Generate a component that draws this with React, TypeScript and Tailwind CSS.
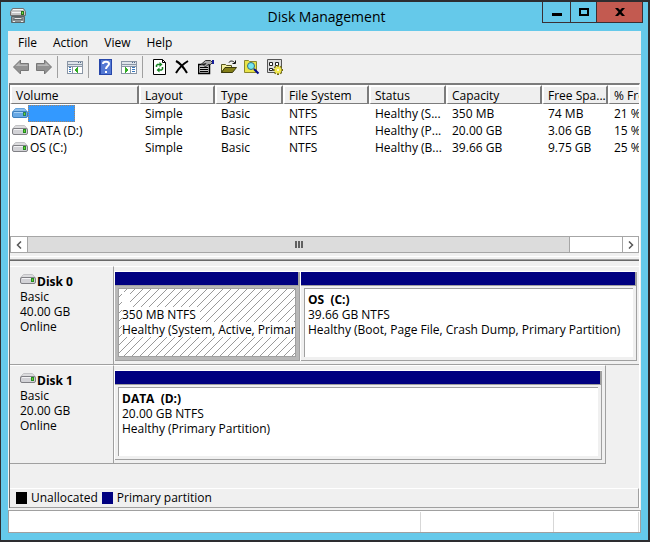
import React from "react";

interface IVolume {
  name: string;
  layout: string;
  type: string;
  fs: string;
  status: string;
  capacity: string;
  free: string;
  percent: string;
  selected?: boolean;
}

const volumes: IVolume[] = [
  { name: "", layout: "Simple", type: "Basic", fs: "NTFS", status: "Healthy (S...", capacity: "350 MB", free: "74 MB", percent: "21 %", selected: true },
  { name: "DATA (D:)", layout: "Simple", type: "Basic", fs: "NTFS", status: "Healthy (P...", capacity: "20.00 GB", free: "3.06 GB", percent: "15 %" },
  { name: "OS (C:)", layout: "Simple", type: "Basic", fs: "NTFS", status: "Healthy (B...", capacity: "39.66 GB", free: "9.75 GB", percent: "25 %" },
];

const columns = [
  { label: "Volume", width: "w-[129px]" },
  { label: "Layout", width: "w-[76px]" },
  { label: "Type", width: "w-[68px]" },
  { label: "File System", width: "w-[86px]" },
  { label: "Status", width: "w-[77px]" },
  { label: "Capacity", width: "w-[96px]" },
  { label: "Free Spa...", width: "w-[66px]" },
  { label: "% Free", width: "w-[102px]" },
];

function DriveIcon({ selected = false }: { selected?: boolean }) {
  return (
    <svg className="w-4 h-[11px] shrink-0" viewBox="0 0 16 11">
      <path d="M3.500.5h9l3 3.500H.5z" fill={selected ? "#8dc0ee" : "#dcdcde"} stroke={selected ? "#65a4dd" : "#c2c2c5"} />
      <rect x=".5" y="3.500" width="15" height="6" rx="1.500" fill={selected ? "#68a9e5" : "#d2d2d6"} stroke={selected ? "#3f80bd" : "#808085"} />
      <path d="M2 4.500h9" stroke={selected ? "#a8d2f7" : "#f3f3f5"} />
      <rect x="11" y="4" width="3" height="4" fill={selected ? "#29825c" : "#238c22"} />
      <rect x="12" y="5" width="1" height="2" fill="#6bd52d" />
    </svg>
  );
}

function AppIcon() {
  return (
    <svg className="w-4 h-4" viewBox="0 0 16 16">
      <path d="M2.500.5h11l2 3v4h-15v-4z" fill="#c5c5c5" stroke="#707070" />
      <path d="M3 1.500h10M2 4.500h9" stroke="#f5f5f5" />
      <rect x="11" y="3" width="3" height="4" fill="#276f20" />
      <rect x="12" y="4" width="1" height="2" fill="#75e13b" />
      <path d="M1.500 8.500h13v6h-13z" fill="#8d9496" stroke="#596568" />
      <path d="M4.500 9.500h7l1 2h-9z" fill="#e7e7e7" stroke="#646b6d" />
      <path d="M3 13.500h2M11 13.500h2" stroke="#e9eeee" />
    </svg>
  );
}

function ArrowIcon({ forward = false }: { forward?: boolean }) {
  return (
    <svg className="w-4 h-4" viewBox="0 0 16 16">
      <path
        d={forward ? "M15.500 8 8.500 1v3.500H.5v7h8V15z" : "M.5 8 7.500 1v3.500h8v7h-8V15z"}
        fill="#929292"
        stroke="#777"
      />
      <path
        d={forward ? "M9.500 3.500v2h-8v1.500h12z" : "M6.500 3.500v2h8v1.500h-12z"}
        fill="#b9b9b9"
      />
    </svg>
  );
}

function PaneIcon({ right = false }: { right?: boolean }) {
  return (
    <svg className="w-4 h-4" viewBox="0 0 16 16" shapeRendering="crispEdges">
      <path d="M0 2h16v13H0z" fill="#8a96a5" />
      <path d="M1 3h14v2H1zM1 6h14v1H1z" fill="#dfe4ea" />
      <path d="M11 3h1v1h-1zM13 3h1v1h-1z" fill="#526b89" />
      <path d={right ? "M1 8h8v6H1zM10 8h5v6h-5z" : "M1 8h4v6H1zM6 8h9v6H6z"} fill="#fff" />
      <path
        d={right ? "M11 8h3v1h-3zM11 10h3v1h-3zM11 12h3v1h-3z" : "M2 8h2v1H2zM2 10h2v1H2zM2 12h2v1H2z"}
        fill="#3978bd"
      />
      <path d={right ? "M4 8v6l4-3z" : "M11 8v6l-4-3z"} fill="#32ad24" />
    </svg>
  );
}

function HelpIcon() {
  return (
    <svg className="w-4 h-4" viewBox="0 0 16 16">
      <path d="M1 0h13v16H1z" fill="#2747aa" />
      <path d="M3 1h10v14H3z" fill="#5479d4" />
      <path d="M5 5c0-3 6-3 6 0 0 2-3 2-3 5" fill="none" stroke="#fff" strokeWidth="2" />
      <path d="M7 12h2v2H7z" fill="#fff" />
    </svg>
  );
}

function RefreshIcon() {
  return (
    <svg className="w-4 h-4" viewBox="0 0 16 16">
      <path d="M1.500.5h9l3 3v12h-12z" fill="#fff" stroke="#000" />
      <path d="M10.500.5v3h3" fill="none" stroke="#000" />
      <path d="M4.500 8V6.500l1-1H8M10.500 8v2l-1 1H7" fill="none" stroke="#168422" strokeWidth="1.500" />
      <path d="M7.500 3l3 2.500-3 2.500zM7.500 8.500l-3 2.500 3 2.500z" fill="#168422" />
    </svg>
  );
}

function DeleteIcon() {
  return (
    <svg className="w-4 h-4" viewBox="0 0 16 16">
      <path d="M1 2c4 2 8 7 11 12M13 2C8 5 4 9 1 14" fill="none" stroke="#000" strokeWidth="2" />
    </svg>
  );
}

function PropertiesIcon() {
  return (
    <svg className="w-4 h-4" viewBox="0 0 16 16">
      <path d="M.5 5.500h11v9H.5z" fill="#c8c8c8" stroke="#000" strokeWidth="1.500" />
      <path d="M2 8.500h8M2 10.500h8M2 12.500h8" stroke="#000" />
      <path d="M3 5.500 7.500 1.500h5l2 2-2 2H10L7.500 8 6 6.500 8 4.500z" fill="#aaa" stroke="#333" />
      <path d="M14 1h2v4h-2z" fill="#171e9d" />
    </svg>
  );
}

function OpenIcon() {
  return (
    <svg className="w-4 h-4" viewBox="0 0 16 16">
      <path d="M.5 13.500v-8h4l1 1h5v2h-6z" fill="#f5f0a0" stroke="#55551d" />
      <path d="M.5 13.500 4 8.500h11.500l-4 5z" fill="#858018" stroke="#3b3a0d" />
      <path d="M8 3.500c1-2 4-2 6 .5M14.500 1.500v3h-3" fill="none" stroke="#111" />
    </svg>
  );
}

function SearchIcon() {
  return (
    <svg className="w-4 h-4" viewBox="0 0 16 16">
      <path d="M.5 13.500v-12h4l1 1h7v11z" fill="#e9e449" stroke="#8b872d" />
      <circle cx="7" cy="7" r="3.500" fill="#73e6ef" stroke="#356b81" />
      <path d="M10 10l4.500 4.500" stroke="#00098d" strokeWidth="2" />
    </svg>
  );
}

function SettingsIcon() {
  return (
    <svg className="w-4 h-4" viewBox="0 0 16 16">
      <path d="M.5.5h14v13H.5z" fill="#ddd" stroke="#555" />
      <path d="M2.500 3.500h3v3h-3zM2.500 9.500h3v2h-3z" fill="#fff" stroke="#222" />
      <path d="M8.500 3.500h3v3h-3z" fill="#fff" stroke="#222" />
      <path d="M11 6v10M6 11h10M7.500 7.500l7 7M14.500 7.500l-7 7" stroke="#6f6813" strokeWidth="2" />
      <circle cx="11" cy="11" r="3.500" fill="#f1e74b" />
      <circle cx="11" cy="11" r="1" fill="#fff" />
    </svg>
  );
}

function ToolButton({ label, children }: { label: string; children: React.ReactNode }) {
  return (
    <button aria-label={label} className="w-[23px] h-6 pl-[2px] flex items-center">
      {children}
    </button>
  );
}

function ToolSeparator() {
  return <div className="w-px h-[22px] mr-[7px] bg-[#a0a0a0]" />;
}

function TitleBar() {
  return (
    <header className="grid grid-cols-[1fr_auto_1fr] h-[29px] pl-[9px] pr-[5px]">
      <div className="pt-[6px]">
        <AppIcon />
      </div>
      <h1 className="text-[14px] leading-[29px]">Disk Management</h1>
      <div className="flex justify-self-end h-[21px] border border-t-0 border-[#3a2f33]">
        <button aria-label="Minimize" className="w-[27px] flex items-center justify-center">
          <svg className="w-[10px] h-[10px]" viewBox="0 0 10 10">
            <path d="M0 6h10v3H0z" />
          </svg>
        </button>
        <button aria-label="Maximize" className="w-[26px] flex items-center justify-center border-l border-[#3a2f33]">
          <svg className="w-[10px] h-2" viewBox="0 0 10 8">
            <path d="M1 1h8v6H1z" fill="none" stroke="#000" strokeWidth="2" />
          </svg>
        </button>
        <button aria-label="Close" className="w-[46px] flex items-center justify-center border-l border-[#3a2f33] bg-[#c35a50]">
          <svg className="w-[10px] h-2" viewBox="0 0 10 8">
            <path d="M0 0h3l2 2 2-2h3L6.500 4 10 8H7L5 6 3 8H0l3.500-4z" />
          </svg>
        </button>
      </div>
    </header>
  );
}

function Toolbar() {
  return (
    <div className="flex items-center h-[29px] pl-[3px] pb-1 border-t border-[#b4b4b4]">
      <ToolButton label="Back"><ArrowIcon /></ToolButton>
      <ToolButton label="Forward"><ArrowIcon forward /></ToolButton>
      <ToolSeparator />
      <ToolButton label="Show console tree"><PaneIcon /></ToolButton>
      <ToolSeparator />
      <ToolButton label="Help"><HelpIcon /></ToolButton>
      <ToolButton label="Show action pane"><PaneIcon right /></ToolButton>
      <ToolSeparator />
      <ToolButton label="Refresh"><RefreshIcon /></ToolButton>
      <ToolButton label="Delete"><DeleteIcon /></ToolButton>
      <ToolButton label="Properties"><PropertiesIcon /></ToolButton>
      <ToolButton label="Open"><OpenIcon /></ToolButton>
      <ToolButton label="Explore"><SearchIcon /></ToolButton>
      <ToolButton label="Settings"><SettingsIcon /></ToolButton>
    </div>
  );
}

function VolumeTable() {
  return (
    <div className="grow overflow-hidden bg-white">
      <table className="table-fixed w-[700px] border-separate border-spacing-0 text-left whitespace-nowrap">
        <thead>
          <tr>
            {columns.map((c) => (
              <th key={c.label} className={`${c.width} p-0 pb-px font-normal`}>
                <div className="h-[19px] pl-1 leading-[18px] bg-[#efefef] border-2 border-white border-r-[#7c7c7c] border-b-[#7c7c7c] border-b">
                  {c.label}
                </div>
              </th>
            ))}
          </tr>
        </thead>
        <tbody>
          {volumes.map((v) => (
            <tr key={v.percent} className="h-[17px] leading-[17px]">
              <td className="p-0">
                <div className="flex items-center h-[17px] pl-[2px]">
                  <DriveIcon selected={v.selected} />
                  {v.selected ? (
                    <span className="w-[47px] h-[17px] bg-[#3399ff] border border-dotted border-[#a08468]" />
                  ) : (
                    <span className="pl-[2px]">{v.name}</span>
                  )}
                </div>
              </td>
              <td className="p-0 pl-[6px]">{v.layout}</td>
              <td className="p-0 pl-[6px]">{v.type}</td>
              <td className="p-0 pl-[6px]">{v.fs}</td>
              <td className="p-0 pl-[6px]">{v.status}</td>
              <td className="p-0 pl-[6px]">{v.capacity}</td>
              <td className="p-0 pl-[6px]">{v.free}</td>
              <td className="p-0 pl-[6px]">{v.percent}</td>
            </tr>
          ))}
        </tbody>
      </table>
    </div>
  );
}

function ScrollBar() {
  return (
    <div className="flex h-[17px] bg-white border border-[#a6a6a6]">
      <button aria-label="Scroll left" className="w-4 flex items-center justify-center">
        <svg className="w-[6px] h-2" viewBox="0 0 6 8">
          <path d="M5 .5 1.500 4 5 7.500" fill="none" stroke="#555" strokeWidth="1.500" />
        </svg>
      </button>
      <div className="grow flex items-center justify-center gap-px bg-[#dcdcdc] border-x border-[#a6a6a6]">
        <span className="w-[2px] h-[7px] bg-[#606060]" />
        <span className="w-[2px] h-[7px] bg-[#606060]" />
        <span className="w-[2px] h-[7px] bg-[#606060]" />
      </div>
      <div className="w-[52px]" />
      <button aria-label="Scroll right" className="w-4 flex items-center justify-center border-l border-[#a6a6a6]">
        <svg className="w-[6px] h-2" viewBox="0 0 6 8">
          <path d="M1 .5 4.500 4 1 7.500" fill="none" stroke="#555" strokeWidth="1.500" />
        </svg>
      </button>
    </div>
  );
}

function Partition({
  title,
  size,
  status,
  selected = false,
  className,
}: {
  title: string;
  size: string;
  status: string;
  selected?: boolean;
  className: string;
}) {
  return (
    <div className={`flex flex-col overflow-hidden border-t border-l border-t-white border-l-white ${className}`}>
      <div className="h-[14px] bg-[#000080] border-r-2 border-b border-[#a0a0a0]" />
      <div className={`grow flex p-[2px] pl-[3px] border-r border-b border-[#a0a0a0] ${selected ? "bg-[#b8b8b8]" : "bg-[#f0f0f0]"}`}>
        <div className={`relative grow overflow-hidden border-t border-l border-[#a0a0a0] mr-[1px] mb-[1px] ${selected ? "border-r border-b" : ""}`}>
          {selected ? (
            <svg className="absolute inset-0 w-full h-full">
              <defs>
                <pattern id="hatch" width="8" height="8" patternUnits="userSpaceOnUse">
                  <path d="M-1 9 9-1M-1 1 1-1M7 9l2-2" stroke="#999" />
                </pattern>
              </defs>
              <rect width="100%" height="100%" fill="#fff" />
              <rect width="100%" height="100%" fill="url(#hatch)" />
            </svg>
          ) : null}
          <div className={`relative h-full pl-[3px] pt-[3px] leading-[15px] whitespace-pre ${selected ? "" : "bg-white"}`}>
            <p className="h-[15px] font-bold">
              {title ? title : <span className="inline-block w-2 h-[15px] bg-white" />}
            </p>
            <p><span className={selected ? "inline-block bg-white pr-1" : ""}>{size}</span></p>
            <p><span className={selected ? "inline-block bg-white" : ""}>{status}</span></p>
          </div>
        </div>
      </div>
    </div>
  );
}

function DiskRow({ name, size, children }: { name: string; size: string; children: React.ReactNode }) {
  return (
    <div className="flex h-[99px]">
      <div className="w-[104px] shrink-0 pl-[10px] pt-[7px] leading-[15px] border-t border-r border-b border-t-white border-[#a0a0a0]">
        <div className="flex">
          <DriveIcon />
          <span className="pl-px font-bold">{name}</span>
        </div>
        <p>Basic</p>
        <p>{size}</p>
        <p>Online</p>
      </div>
      <div className="grow flex min-w-0">{children}</div>
    </div>
  );
}

export default function App() {
  return (
    <div className="min-h-screen flex flex-col bg-[#65c9ea] border-y-2 border-l border-r-2 border-[#2d2d30] font-['Open_Sans','Noto_Sans',sans-serif] text-[12px] text-black">
      <TitleBar />
      <main className="grow flex flex-col mx-[7px] mb-[7px] bg-[#f0f0f0]">
        <nav className="flex h-[23px] gap-4 pl-[10px] leading-[23px]">
          <button>File</button>
          <button>Action</button>
          <button>View</button>
          <button>Help</button>
        </nav>
        <Toolbar />
        {/* Volume list and graphical view */}
        <div className="grow flex flex-col mx-px border-t-2 border-x border-t-[#7c7c7c] border-l-[#696969] border-r-white">
          <VolumeTable />
          <ScrollBar />
          <div className="h-2 pt-[3px] border-b border-[#696969]">
            <div className="h-1 border-t border-b border-t-white border-b-[#a0a0a0]" />
          </div>
          <section className="pt-[5px]">
            <DiskRow name="Disk 0" size="40.00 GB">
              <div className="grow flex min-w-0 pt-1 pb-[3px] pr-[2px] border-y border-t-white border-b-[#a0a0a0]">
                <Partition className="w-[186px] shrink-0" title="" size="350 MB NTFS" status="Healthy (System, Active, Primary Partition)" selected />
                <Partition className="grow" title="OS  (C:)" size="39.66 GB NTFS" status="Healthy (Boot, Page File, Crash Dump, Primary Partition)" />
              </div>
            </DiskRow>
            <DiskRow name="Disk 1" size="20.00 GB">
              <div className="grow flex mr-[33px] pt-1 pb-[3px] pr-[3px] border-y border-r border-t-white border-[#a0a0a0]">
                <Partition className="grow" title="DATA  (D:)" size="20.00 GB NTFS" status="Healthy (Primary Partition)" />
              </div>
            </DiskRow>
          </section>
          <div className="flex items-center h-5 mt-6 pl-[6px] border-y border-r border-t-white border-[#a0a0a0]">
            <span className="w-[11px] h-3 mr-1 bg-black" />
            <span>Unallocated</span>
            <span className="w-[11px] h-3 mx-1 bg-[#000080]" />
            <span>Primary partition</span>
          </div>
        </div>
        <footer className="flex h-[23px] pt-px mt-[2px] bg-white border border-[#a0a0a0]">
          <div className="grow border-r border-[#d7d7d7]" />
          <div className="w-[133px] border-r border-[#d7d7d7]" />
          <div className="w-[85px] mr-px border-r border-[#d7d7d7]" />
        </footer>
      </main>
    </div>
  );
}
